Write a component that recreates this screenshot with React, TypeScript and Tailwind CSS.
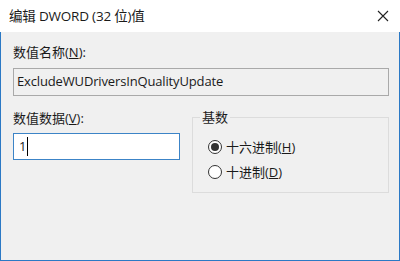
import React from "react";

const font = { fontFamily: '"Open Sans", "Noto Sans CJK SC", sans-serif' };

function Radio({ checked, label, u }: { checked: boolean; label: string; u: string }) {
  return (
    <div className="flex items-center gap-[4px] h-[18px]">
      <span className="w-[14px] h-[14px] rounded-full border border-[#333333] bg-white flex items-center justify-center">
        {checked && <span className="w-[8px] h-[8px] rounded-full bg-[#333333]" />}
      </span>
      <span className="text-[13px] leading-[18px] text-[#1a1a1a]">
        {label}(<span className="underline">{u}</span>)
      </span>
    </div>
  );
}

export default function App() {
  return (
    <div className="w-[400px] h-[261px] flex flex-col select-none" style={font}>
      <div className="h-[32px] bg-white flex items-center justify-between pl-[9px] pr-[10px] shrink-0">
        <span className="text-[13.5px] text-[#1a1a1a] tracking-[-0.2px]">编辑 DWORD (32 位)值</span>
        <svg width="12" height="12" viewBox="0 0 12 12" className="mr-[1px]">
          <path d="M1 1 L11 11 M11 1 L1 11" stroke="#222" strokeWidth="1.1" fill="none" />
        </svg>
      </div>
      <div className="flex-1 bg-[#f0f0f0] border-x border-b border-[#2b79c5] pl-[12px] pr-[10px] pt-[11px] flex flex-col">
        <div className="text-[13px] leading-[18px] text-[#1a1a1a]">
          数值名称(<span className="underline">N</span>):
        </div>
        <div className="mt-[7px] h-[28px] border border-[#a9a9a9] bg-[#f0f0f0] flex items-center pl-[3px] text-[13px] tracking-[-0.15px] text-[#1a1a1a]">
          ExcludeWUDriversInQualityUpdate
        </div>
        <div className="flex mt-[12px]">
          <div className="w-[167px] flex flex-col">
            <div className="text-[13px] leading-[18px] text-[#1a1a1a] mt-[1px]">
              数值数据(<span className="underline">V</span>):
            </div>
            <div className="mt-[6px] h-[27px] border border-[#3c84c7] bg-white flex items-center pl-[5px] text-[13px] text-[#1a1a1a]">
              1<span className="inline-block w-[1px] h-[19px] bg-black ml-[1px]" />
            </div>
          </div>
          <div className="ml-[12px] flex-1 relative mt-[9px] h-[76px] border border-[#dcdcdc]">
            <span className="absolute left-[7px] top-[-10px] px-[2px] bg-[#f0f0f0] text-[13px] leading-[18px] text-[#1a1a1a]">
              基数
            </span>
            <div className="flex flex-col gap-[7px] pl-[15px] pt-[20px]">
              <Radio checked label="十六进制" u="H" />
              <Radio checked={false} label="十进制" u="D" />
            </div>
          </div>
        </div>
      </div>
    </div>
  );
}
